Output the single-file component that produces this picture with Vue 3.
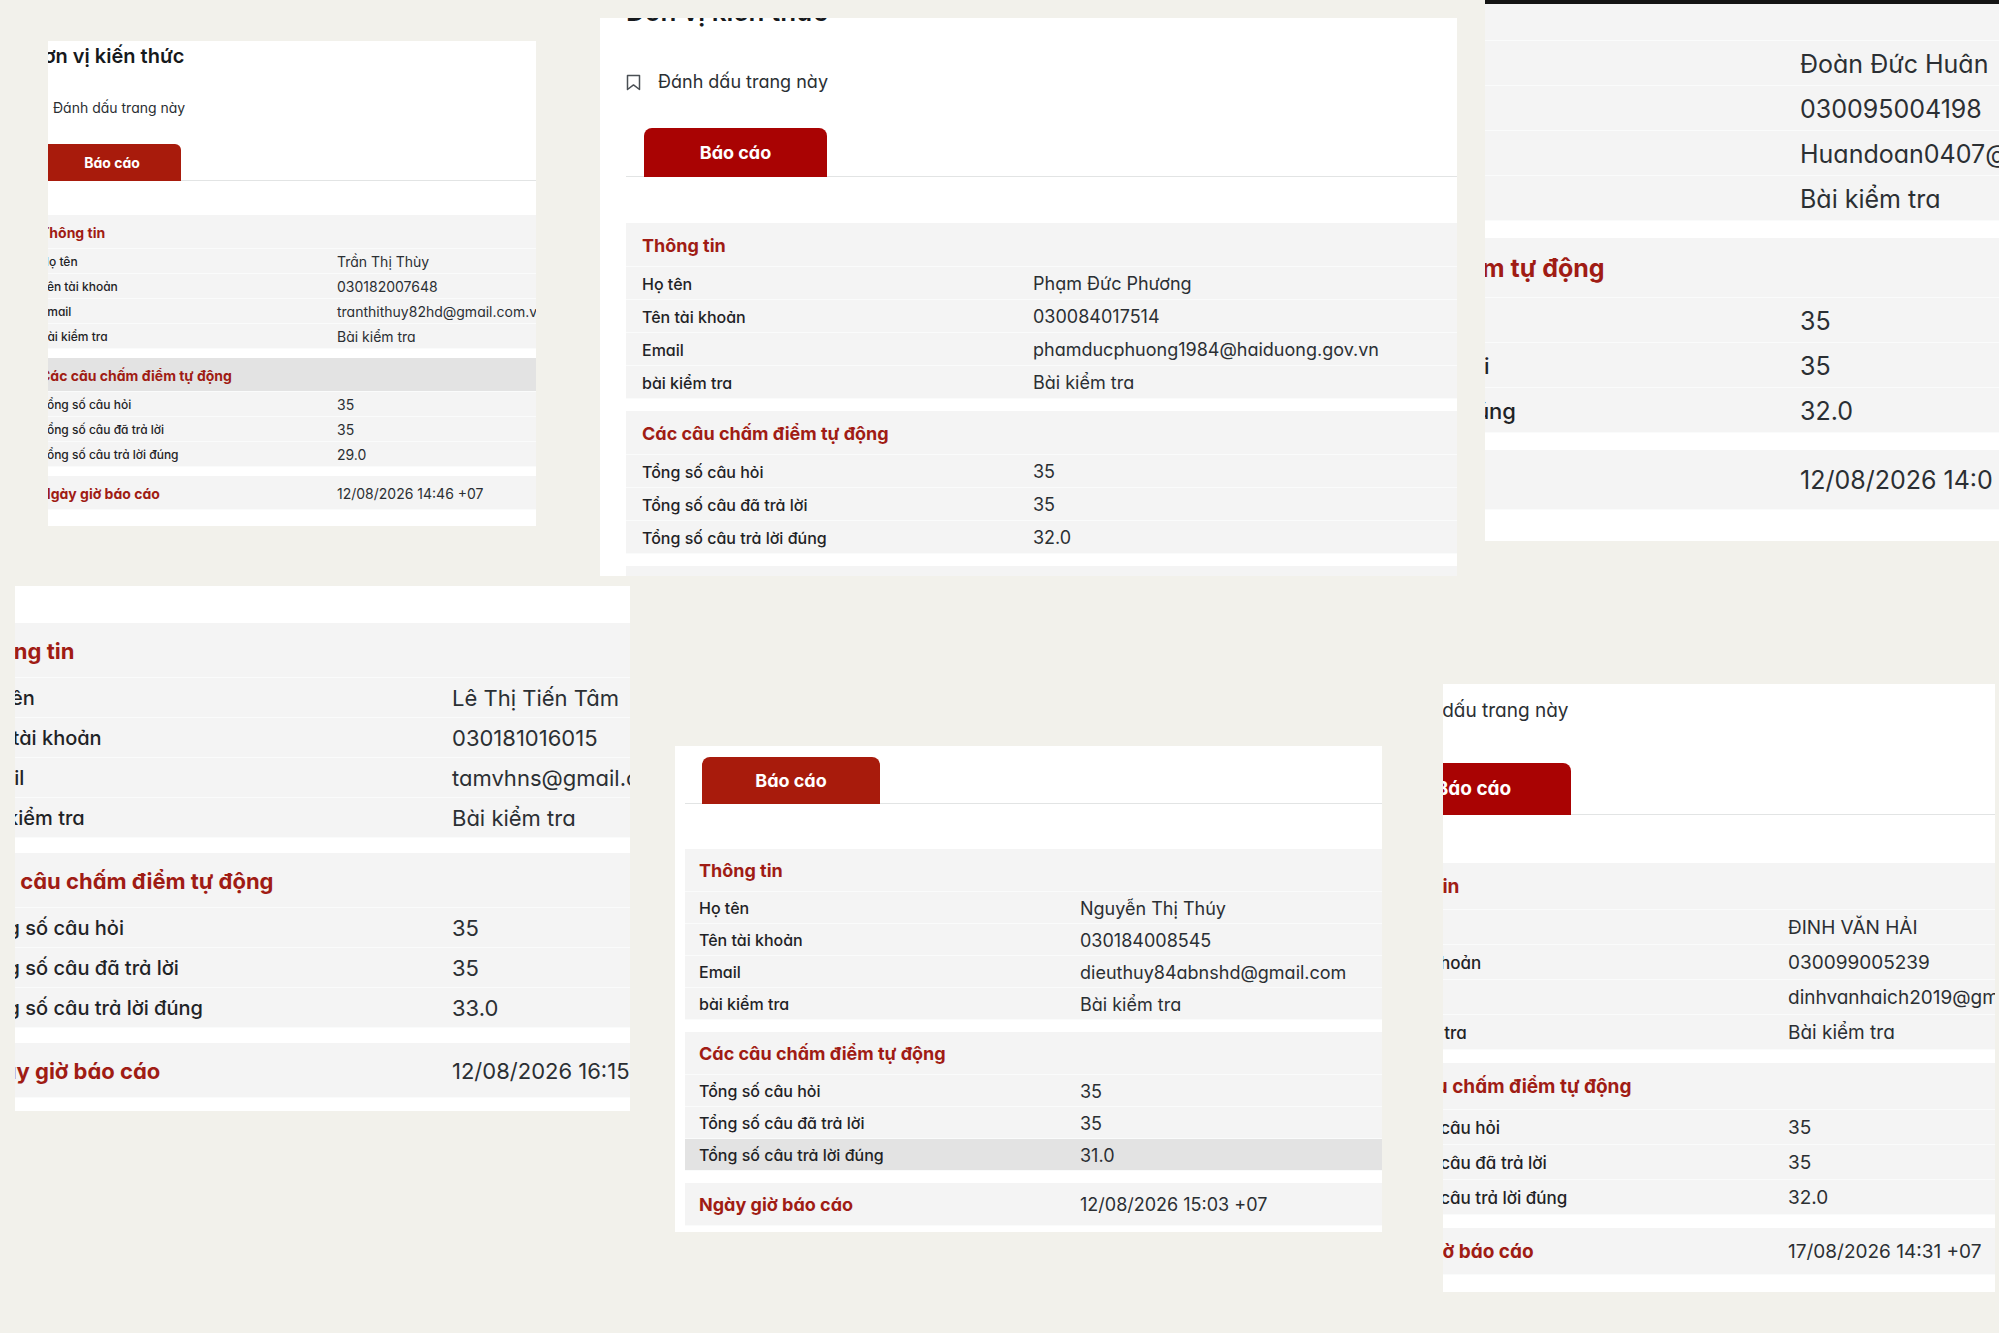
<script setup>
const makeSections = (person, score, date) => [
  {
    title: 'Thông tin',
    rows: [
      ['Họ tên', person.name],
      ['Tên tài khoản', person.account],
      ['Email', person.email],
      ['bài kiểm tra', 'Bài kiểm tra'],
    ],
  },
  {
    title: 'Các câu chấm điểm tự động',
    rows: [
      ['Tổng số câu hỏi', '35'],
      ['Tổng số câu đã trả lời', '35'],
      ['Tổng số câu trả lời đúng', score],
    ],
  },
  { title: 'Ngày giờ báo cáo', value: date, rows: [] },
]

const bands = [
  [
    {
      id: 'thuy-tran', heading: true, bookmark: true, tab: true, activeTitle: 1,
      sections: makeSections(
        { name: 'Trần Thị Thùy', account: '030182007648', email: 'tranthithuy82hd@gmail.com.vn' },
        '29.0', '12/08/2026 14:46 +07'),
    },
    {
      id: 'phuong', heading: true, bookmark: true, tab: true,
      sections: makeSections(
        { name: 'Phạm Đức Phương', account: '030084017514', email: 'phamducphuong1984@haiduong.gov.vn' },
        '32.0', '12/08/2026'),
    },
    {
      id: 'huan',
      sections: makeSections(
        { name: 'Đoàn Đức Huân', account: '030095004198', email: 'Huandoan0407@gmail.com' },
        '32.0', '12/08/2026 14:0'),
    },
  ],
  [
    {
      id: 'tam',
      sections: makeSections(
        { name: 'Lê Thị Tiến Tâm', account: '030181016015', email: 'tamvhns@gmail.com' },
        '33.0', '12/08/2026 16:15 +07'),
    },
    {
      id: 'thuy-nguyen', tab: true, activeRow: '1-2',
      sections: makeSections(
        { name: 'Nguyễn Thị Thúy', account: '030184008545', email: 'dieuthuy84abnshd@gmail.com' },
        '31.0', '12/08/2026 15:03 +07'),
    },
    {
      id: 'hai', bookmark: true, tab: true,
      sections: makeSections(
        { name: 'ĐINH VĂN HẢI', account: '030099005239', email: 'dinhvanhaich2019@gmail.com' },
        '32.0', '17/08/2026 14:31 +07'),
    },
  ],
]
</script>

<template>
  <main class="board">
    <div v-for="(band, b) in bands" :key="b" class="band">
      <article v-for="card in band" :key="card.id" class="card" :class="card.id">
        <div class="sheet">
          <h2 v-if="card.heading" class="heading">Đơn vị kiến thức</h2>
          <button v-if="card.bookmark" type="button" class="bookmark">
            <svg viewBox="0 0 15 17" aria-hidden="true">
              <path d="M1.5 1.5h12v14l-6-4.6-6 4.6z" />
            </svg>
            <span>Đánh dấu trang này</span>
          </button>
          <div v-if="card.tab" class="tabs" role="tablist">
            <button type="button" class="tab" role="tab" aria-selected="true">Báo cáo</button>
          </div>
          <table class="report">
            <colgroup><col class="label-col"><col></colgroup>
            <tbody v-for="(section, s) in card.sections" :key="section.title">
              <tr class="title-row" :class="{ active: card.activeTitle === s }">
                <th scope="row">{{ section.title }}</th>
                <td>{{ section.value }}</td>
              </tr>
              <tr v-for="(row, r) in section.rows" :key="row[0]" :class="{ active: card.activeRow === s + '-' + r }">
                <th scope="row">{{ row[0] }}</th>
                <td>{{ row[1] }}</td>
              </tr>
            </tbody>
          </table>
        </div>
      </article>
    </div>
  </main>
</template>

<style>
body {
  margin: 0;
  background: #f2f1eb;
}
</style>

<style scoped>
.board {
  display: flex;
  flex-direction: column;
  gap: 10px;
  box-sizing: border-box;
  min-height: 100vh;
  overflow: hidden;
  background: #f2f1eb;
  color: #2b2f33;
  font-family: Inter, "Noto Sans", sans-serif;
  font-feature-settings: "cv11";
}

.band {
  display: flex;
  align-items: flex-start;
}

.card {
  min-width: 0;
  box-sizing: border-box;
  overflow: hidden;
  background: #fff;
}

.heading {
  margin: 0;
  color: #16191c;
  font-size: var(--heading);
  font-weight: 600;
  line-height: var(--heading-line);
  white-space: nowrap;
}

.bookmark {
  display: flex;
  align-items: center;
  gap: var(--icon-gap);
  padding: 0;
  border: 0;
  background: none;
  color: #2b2f33;
  font: inherit;
  font-feature-settings: inherit;
  font-size: var(--text);
  line-height: 24px;
  white-space: nowrap;
}

.bookmark svg {
  width: var(--icon);
  fill: none;
  stroke: #4a4f54;
  stroke-width: 1.5;
  stroke-linejoin: round;
}

.tabs {
  display: flex;
  padding-left: var(--tab-inset);
  box-shadow: inset 0 -1px #e2e4e4;
}

.tab {
  width: var(--tab-width);
  height: var(--tab-height);
  padding: 0 0 1px;
  border: 0;
  border-radius: var(--radius) var(--radius) 0 0;
  background: var(--tab-color);
  color: #fff;
  font: inherit;
  font-feature-settings: inherit;
  font-size: var(--text);
  font-weight: 700;
}

.report {
  width: 100%;
  table-layout: fixed;
  border-spacing: 0;
  font-size: var(--text);
  white-space: nowrap;
}

.label-col {
  width: var(--label-col);
}

th,
td {
  padding: 2px 0 0;
  border-bottom: 1px solid #fafbfb;
  background: #f4f4f4;
  background-clip: padding-box;
  font-weight: 400;
  line-height: calc(var(--row) - 3px);
  text-align: left;
}

th {
  padding-left: var(--pad);
  color: #1f2326;
  font-size: var(--label);
  font-weight: 500;
}

.title-row th,
.title-row td {
  line-height: calc(var(--title-row) - 3px);
}

.title-row th {
  color: #a01c14;
  font-size: var(--text);
  font-weight: 700;
}

tbody + tbody .title-row > * {
  border-top: var(--gap) solid #fff;
}

.active > * {
  background-color: #e3e3e3;
}

.thuy-tran {
  --text: 14px;
  --label: 12px;
  --heading: 20px;
  --heading-line: 24px;
  --row: 25px;
  --title-row: 34px;
  --gap: 9px;
  --pad: 11px;
  --label-col: 308px;
  --icon: 11px;
  --icon-gap: 13px;
  --tab-inset: 14px;
  --tab-width: 138px;
  --tab-height: 37px;
  --tab-color: #a81b0c;
  --radius: 6px;
  flex: 488 1 0;
  margin: 41px 0 0 48px;
  padding: 3px 0 16px;
}

.thuy-tran .sheet {
  margin-left: -19px;
}

.thuy-tran .bookmark {
  margin: 28px 0 24px;
}

.thuy-tran .report {
  margin-top: 34px;
}

.phuong {
  --text: 18px;
  --label: 16px;
  --heading: 26px;
  --heading-line: 32px;
  --row: 33px;
  --title-row: 44px;
  --gap: 12px;
  --pad: 16px;
  --label-col: 407px;
  --icon: 15px;
  --icon-gap: 17px;
  --tab-inset: 18px;
  --tab-width: 183px;
  --tab-height: 49px;
  --tab-color: #a90303;
  --radius: 8px;
  flex: 857 1 0;
  margin: 18px 0 0 64px;
}

.phuong .sheet {
  padding-left: 26px;
}

.phuong .heading {
  margin-top: -22px;
}

.phuong .bookmark {
  margin: 42px 0 34px;
}

.phuong .report {
  margin: 46px 0 -34px;
}

.huan {
  --text: 25px;
  --label: 22px;
  --row: 45px;
  --title-row: 60px;
  --gap: 17px;
  --pad: 18px;
  --label-col: 556px;
  flex: 514 1 0;
  margin-left: 28px;
  padding-bottom: 31px;
  border-top: 4px solid #141414;
}

.huan .sheet {
  margin: -23px 0 0 -241px;
}

.tam {
  --text: 22px;
  --label: 20px;
  --row: 40px;
  --title-row: 55px;
  --gap: 15px;
  --pad: 20px;
  --label-col: 500px;
  flex: 615 1 0;
  margin-left: 15px;
  padding: 37px 0 13px;
}

.tam .sheet {
  margin-left: -63px;
}

.thuy-nguyen {
  --text: 18px;
  --label: 16px;
  --row: 32px;
  --title-row: 43px;
  --gap: 12px;
  --pad: 14px;
  --label-col: 395px;
  --tab-inset: 17px;
  --tab-width: 178px;
  --tab-height: 47px;
  --tab-color: #a81b0c;
  --radius: 8px;
  flex: 707 1 0;
  margin: 160px 0 0 45px;
  padding: 11px 0 6px;
}

.thuy-nguyen .sheet {
  padding-left: 10px;
}

.thuy-nguyen .report {
  margin-top: 45px;
}

.hai {
  --text: 19px;
  --label: 17px;
  --row: 35px;
  --title-row: 47px;
  --gap: 13px;
  --pad: 17px;
  --label-col: 434px;
  --icon: 16px;
  --icon-gap: 19px;
  --tab-inset: 22px;
  --tab-width: 195px;
  --tab-height: 52px;
  --tab-color: #a90303;
  --radius: 8px;
  flex: 552 1 0;
  margin: 98px 4px 0 61px;
  padding: 15px 0 17px;
}

.hai .sheet {
  margin-left: -89px;
}

.hai .bookmark {
  margin-bottom: 40px;
}

.hai .report {
  margin-top: 48px;
}
</style>
